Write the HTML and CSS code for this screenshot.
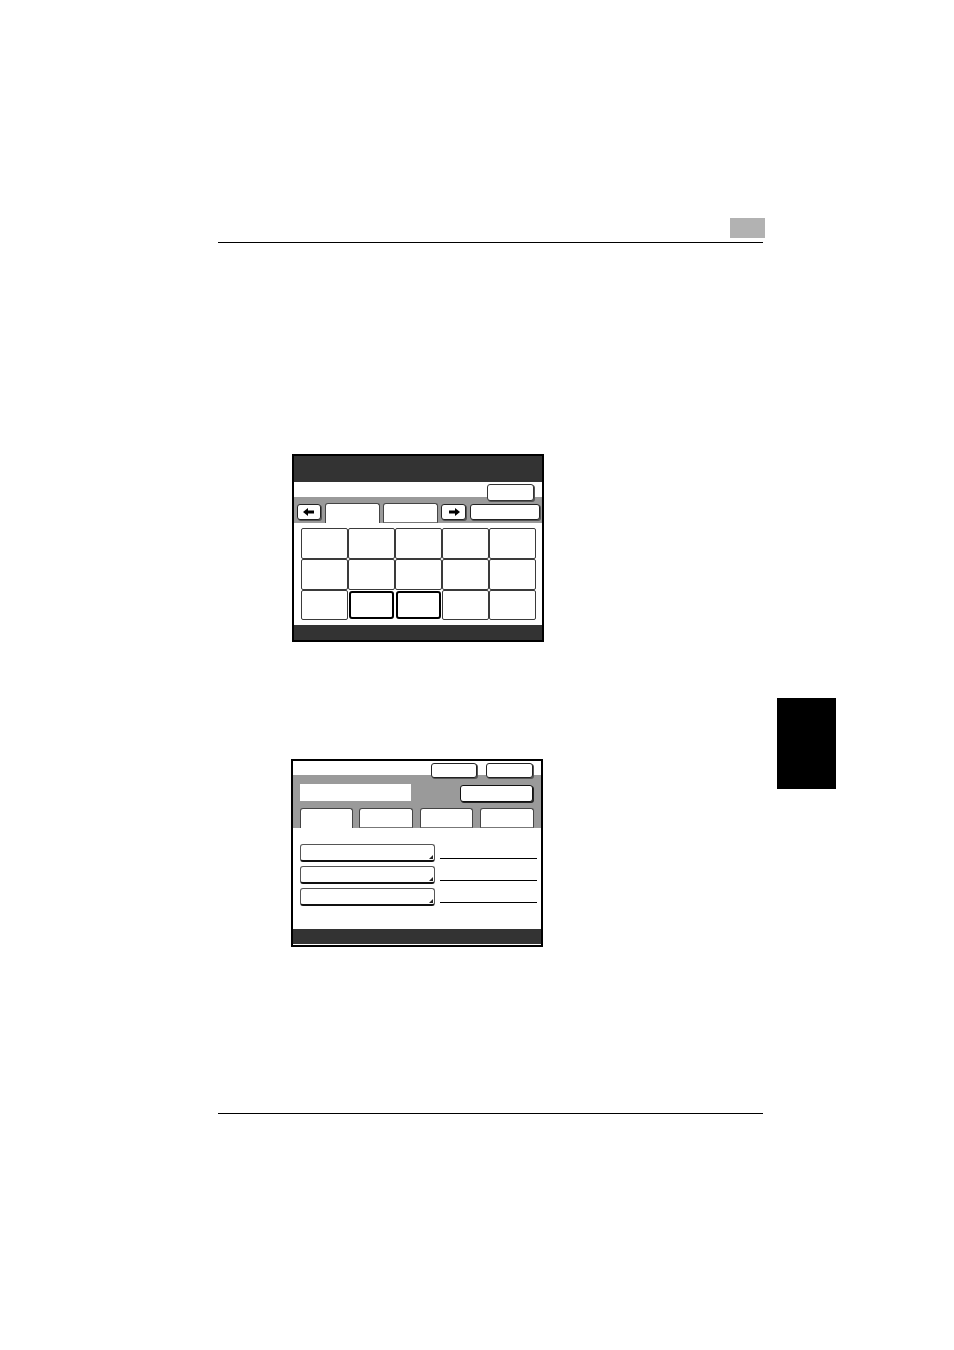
FILE: index.html
```html
<!DOCTYPE html>
<html>
<head>
<meta charset="utf-8">
<link rel="stylesheet" href="styles.css">
</head>
<body>
<div class="page">
  <div class="header">
    <div class="chapter-box"></div>
  </div>
  <div class="rule header-rule"></div>

  <div class="screen screen1">
    <div class="s-head"></div>
    <div class="s-band band1">
      <div class="row1">
        <div class="btn btn-ok"></div>
      </div>
      <div class="tabrow">
        <div class="btn arrow"><svg width="12" height="8" viewBox="0 0 12 8"><polygon points="0,4 5,0 5,2.5 11,2.5 11,5.5 5,5.5 5,8" fill="#000"/></svg></div>
        <div class="tab active w55"></div>
        <div class="tab w55 g3"></div>
        <div class="btn arrow g3 w25"><svg width="12" height="8" viewBox="0 0 12 8"><polygon points="12,4 7,0 7,2.5 1,2.5 1,5.5 7,5.5 7,8" fill="#000"/></svg></div>
        <div class="btn wide"></div>
      </div>
    </div>
    <div class="s-body body1">
      <div class="keys">
        <div class="key"></div><div class="key"></div><div class="key"></div><div class="key"></div><div class="key"></div>
        <div class="key"></div><div class="key"></div><div class="key"></div><div class="key"></div><div class="key"></div>
        <div class="key"></div><div class="key sel"></div><div class="key sel"></div><div class="key"></div><div class="key"></div>
      </div>
    </div>
    <div class="s-foot"></div>
  </div>

  <div class="screen screen2">
    <div class="s-band band2">
      <div class="row1 r1b">
        <div class="btn b46"></div>
        <div class="btn b47"></div>
      </div>
      <div class="row2">
        <div class="field"></div>
        <div class="btn bold"></div>
      </div>
      <div class="tabrow tabs2">
        <div class="tab active t53"></div>
        <div class="tab t54"></div>
        <div class="tab t53"></div>
        <div class="tab t54"></div>
      </div>
    </div>
    <div class="s-body body2">
      <div class="item"><div class="ibtn"></div><div class="iline"></div></div>
      <div class="item"><div class="ibtn"></div><div class="iline"></div></div>
      <div class="item"><div class="ibtn"></div><div class="iline"></div></div>
    </div>
    <div class="s-foot"></div>
  </div>

  <div class="rule footer-rule"></div>

  <div class="thumb"></div>
</div>
</body>
</html>
```

FILE: styles.css
```css
html, body { margin: 0; padding: 0; background: #fff; }
body { font-family: "Liberation Sans", Arial, sans-serif; }
.page { position: relative; width: 954px; height: 1350px; padding-top: 218px; box-sizing: border-box; overflow: hidden; }

.header { margin-left: 218px; width: 547px; display: flex; justify-content: flex-end; }
.chapter-box { width: 35px; height: 20px; background: #b2b2b2; }
.rule { height: 1px; background: #000; width: 545px; margin-left: 218px; }
.header-rule { margin-top: 4px; }

.screen { box-sizing: border-box; width: 252px; height: 188px; border: 2px solid #000; display: flex; flex-direction: column; background: #fff; }
.screen1 { margin-top: 211px; margin-left: 292px; }
.screen2 { margin-top: 117px; margin-left: 291px; }

.s-head { height: 26px; background: #333; }
.s-foot { height: 15px; background: #333; }

.btn { box-sizing: border-box; background: #fff; border: 1px solid #222; border-radius: 3px; box-shadow: 1px 1px 0 #555; }

.band1 { height: 41px; background: linear-gradient(#fff 0 15px, #9a9a9a 15px); display: flex; flex-direction: column; }
.row1 { display: flex; justify-content: flex-end; padding-right: 8px; }
.band1 .row1 { height: 21px; }
.btn-ok { width: 47px; height: 17px; margin-top: 2px; border-color: #333; }

.tabrow { display: flex; align-items: flex-start; height: 20px; padding-left: 3px; }
.arrow { width: 24px; height: 16px; margin-top: 1px; display: flex; align-items: center; justify-content: center; }
.arrow svg { display: block; }
.w25 { width: 25px; }
.tab { box-sizing: border-box; height: 20px; background: #fff; border: 1px solid #444; border-bottom: 1px solid #777; border-radius: 3px 3px 0 0; }
.tab.active { border-bottom: none; }
.w55 { width: 55px; margin-left: 4px; }
.g3 { margin-left: 3px; }
.wide { width: 70px; height: 16px; margin-top: 1px; margin-left: 4px; }

.body1 { height: 102px; padding: 5px 0 0 7px; box-sizing: border-box; }
.keys { display: grid; grid-template-columns: repeat(5, 47px); grid-template-rows: 31px 31px 30px; width: 235px; }
.key { box-sizing: border-box; border: 1px solid #3a3a3a; border-radius: 2px; background: #fff; }
.key.sel { border: 2px solid #000; border-radius: 3px; margin: 1px; }

.band2 { height: 67px; background: linear-gradient(#fff 0 14px, #9a9a9a 14px); display: flex; flex-direction: column; }
.r1b { height: 17px; padding-top: 2px; box-sizing: border-box; gap: 9px; }
.b46 { width: 46px; height: 15px; }
.b47 { width: 47px; height: 15px; }
.row2 { display: flex; margin-top: 6px; height: 18px; padding-left: 7px; }
.field { width: 111px; height: 17px; background: #fff; }
.bold { width: 73px; height: 17px; margin-top: 1px; margin-left: 49px; border: 1px solid #111; box-shadow: 1px 1px 0 #222; }
.tabs2 { margin-top: 6px; padding-left: 7px; }
.t53 { width: 53px; }
.t54 { width: 54px; }
.tabs2 .tab + .tab { margin-left: 6px; }
.tabs2 .tab:nth-child(3) { margin-left: 7px; }
.tabs2 .tab:nth-child(4) { margin-left: 7px; }

.body2 { height: 101px; padding: 16px 0 0 7px; box-sizing: border-box; display: flex; flex-direction: column; gap: 4px; }
.item { display: flex; height: 18px; }
.ibtn { position: relative; box-sizing: border-box; width: 135px; height: 18px; border: 1px solid #555; border-bottom: 2px solid #111; border-radius: 3px; background: #fff; }
.ibtn::after { content: ""; position: absolute; right: 1px; bottom: 1px; width: 0; height: 0; border-left: 4px solid transparent; border-bottom: 4px solid #222; }
.iline { width: 97px; height: 15px; margin-left: 5px; border-bottom: 1px solid #000; box-sizing: border-box; }

.footer-rule { margin-top: 166px; }

.thumb { position: absolute; left: 777px; top: 698px; width: 59px; height: 91px; background: #000; }
```
